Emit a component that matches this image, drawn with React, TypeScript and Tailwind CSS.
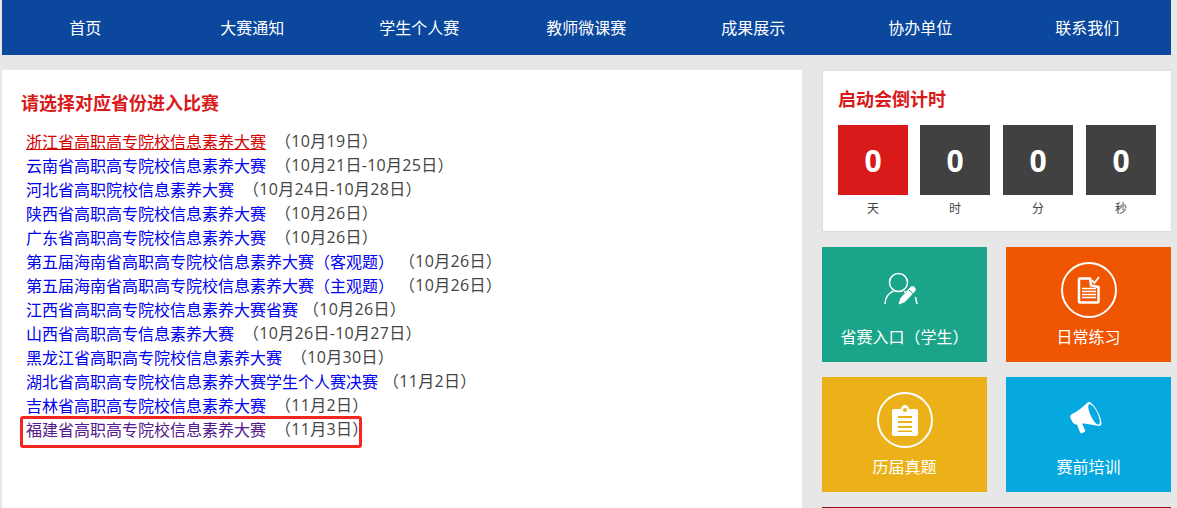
const nav = ["首页", "大赛通知", "学生个人赛", "教师微课赛", "成果展示", "协办单位", "联系我们"];

const rows: [string, string, string, boolean][] = [
  ["浙江省高职高专院校信息素养大赛", "（10月19日）", "hover", true],
  ["云南省高职高专院校信息素养大赛", "（10月21日-10月25日）", "", true],
  ["河北省高职院校信息素养大赛", "（10月24日-10月28日）", "", true],
  ["陕西省高职高专院校信息素养大赛", "（10月26日）", "", true],
  ["广东省高职高专院校信息素养大赛", "（10月26日）", "", true],
  ["第五届海南省高职高专院校信息素养大赛（客观题）", "（10月26日）", "", false],
  ["第五届海南省高职高专院校信息素养大赛（主观题）", "（10月26日）", "", false],
  ["江西省高职高专院校信息素养大赛省赛", "（10月26日）", "", false],
  ["山西省高职高专信息素养大赛", "（10月26日-10月27日）", "", true],
  ["黑龙江省高职高专院校信息素养大赛", "（10月30日）", "", true],
  ["湖北省高职高专院校信息素养大赛学生个人赛决赛", "（11月2日）", "", false],
  ["吉林省高职高专院校信息素养大赛", "（11月2日）", "", true],
  ["福建省高职高专院校信息素养大赛", "（11月3日）", "visited", true],
];

const UserPen = () => (
  <svg className="mb-[3px] mr-[7px]" width="34" height="34" viewBox="0 0 34 34" fill="none" stroke="white" strokeWidth="1.5">
    <circle cx="14.500" cy="10.500" r="9" />
    <path d="M1 32c0-6 3.500-11 8.500-13" />
    <path d="M20 19.500c1 .3 1.800.7 2.500 1.200" />
    <path d="M15 32l2-6 9.500-10.500c1.200-1.200 3-1.200 4 0s1 2.800 0 4l-9.500 10z" fill="white" stroke="white" strokeWidth="1" />
    <path d="M25 18l4 3.500" stroke="#1aa58a" strokeWidth="1" />
    <path d="M31.500 25l1.500 7" />
  </svg>
);

const Circle = ({ children }: { children: React.ReactNode }) => (
  <div className="flex h-[56px] w-[56px] items-center justify-center rounded-full border-2 border-white">{children}</div>
);

const DocIcon = () => (
  <svg width="24" height="28" viewBox="0 0 24 28" fill="none">
    <path d="M2 2.500h11l1 7 7.500 1.500v14.500a1 1 0 0 1-1 1H3a1 1 0 0 1-1-1V3.500a1 1 0 0 1 1-1z" stroke="white" strokeWidth="2.500" />
    <path d="M5 12.500h14M5 15.500h14M5 18.500h14M5 21.500h14" stroke="white" strokeWidth="1.500" />
    <path d="M14.500 4l3 3 4.500-6" stroke="white" strokeWidth="1.800" />
  </svg>
);

const ClipIcon = () => (
  <svg width="26" height="31" viewBox="0 0 26 31">
    <path
      fillRule="evenodd"
      fill="white"
      d="M9 4c.5-2.500 2-4 4-4s3.500 1.500 4 4h7a2 2 0 0 1 2 2v23a2 2 0 0 1-2 2H2a2 2 0 0 1-2-2V6a2 2 0 0 1 2-2zM13 3a2 2 0 1 0 0 4 2 2 0 0 0 0-4zM6 11v2h14v-2zM6 16v2h14v-2zM6 21v2h14v-2zM6 25.500v1.500h14v-1.500z"
    />
  </svg>
);

const Horn = () => (
  <svg className="mb-[3px] mr-[6px]" width="32" height="33" viewBox="0 0 32 33">
    <path
      fill="white"
      d="M1 17c-1.300-1.500-.8-4 1-5 5-2.500 10-6 15-11 1-1 2.500-1.300 3.500-.5 5 3.500 11 14.500 11 21 0 1.500-1 2.500-2.500 2.500-6-1-11.500-2.500-17-2.500l3 6.500c.4 1-.1 1.800-1 2.300l-1.500.8c-1 .5-2 .2-2.500-.8L7 22.500c-2.500.5-5-2.500-6-5.500z"
    />
    <path
      fill="#05a9e0"
      d="M19 2.500c-1.600.8-.5 6 2 11.500s5.800 9 7.800 8.500c2-.5 1-6-1.500-11.500S21 1.500 19 2.500z"
    />
  </svg>
);

const tiles = [
  { label: "省赛入口（学生）", bg: "bg-[#1aa58a]", icon: <UserPen /> },
  { label: "日常练习", bg: "bg-[#f05602]", icon: <Circle><DocIcon /></Circle> },
  { label: "历届真题", bg: "bg-[#ecb018]", icon: <Circle><ClipIcon /></Circle> },
  { label: "赛前培训", bg: "bg-[#05a9e0]", icon: <Horn /> },
];

const units = ["天", "时", "分", "秒"];

export default function App() {
  return (
    <div className="h-[508px] w-[1177px] overflow-hidden bg-[#e7e7e7] pl-[2px] font-['Noto_Sans_CJK_SC','Liberation_Sans',sans-serif] text-[16px]">
      <nav className="flex h-[55px] w-[1169px] bg-[#0a479d] text-white">
        {nav.map((n) => (
          <a key={n} className="flex flex-1 items-center justify-center pb-[2px] pr-[0.5px] leading-none">{n}</a>
        ))}
      </nav>
      <div className="mt-[15px] flex gap-[20px]">
        <main className="relative h-[438px] w-[800px] bg-white pl-[19px] pt-[20px]">
          <h2 className="text-[18px] font-bold leading-[24px] text-[#d91a1a]">请选择对应省份进入比赛</h2>
          <ul className="mt-[15px] pl-[5px]">
            {rows.map(([name, date, state, wide]) => (
              <li key={name} className="flex h-[24px] items-center leading-[24px] text-[#444]">
                <a className={state === "hover" ? "text-[#d40000] underline" : state === "visited" ? "text-[#551a8b]" : "text-[#0000ee]"}>{name}</a>
                <span className={`font-['Open_Sans','Noto_Sans_CJK_SC',sans-serif] tracking-[0.3px] ${wide ? "ml-[9px]" : "ml-[5px]"}`}>{date}</span>
              </li>
            ))}
          </ul>
          <div className="absolute left-[18px] top-[346px] h-[32px] w-[342px] rounded-[3px] border-[3px] border-[#f5251f]" />
        </main>
        <aside className="w-[350px]">
          <section className="h-[162px] border border-[#dedede] bg-white px-[15px] pt-[15px]">
            <h3 className="text-[18px] font-bold leading-[24px] text-[#d91a1a]">启动会倒计时</h3>
            <div className="mt-[15px] flex gap-[13px]">
              {units.map((u, i) => (
                <div key={u} className={`w-[70px] text-center ${i === 0 ? "mr-[-1px]" : ""}`}>
                  <div className={`flex h-[70px] items-center justify-center font-['Open_Sans','Liberation_Sans',sans-serif] text-[30px] font-bold text-white ${i === 0 ? "bg-[#d91a1a]" : "bg-[#414141]"}`}>0</div>
                  <div className="mt-[5px] text-[12px] leading-[16px] text-[#444]">{u}</div>
                </div>
              ))}
            </div>
          </section>
          <div className="mt-[15px] grid w-[349px] grid-cols-[165px_165px] justify-between gap-y-[15px]">
            {tiles.map((t) => (
              <div key={t.label} className={`flex h-[115px] flex-col items-center text-white ${t.bg}`}>
                <div className="mt-[15px] flex h-[56px] items-center justify-center">{t.icon}</div>
                <div className="mt-[6px] leading-[24px]">{t.label}</div>
              </div>
            ))}
          </div>
          <div className="mt-[15px] h-[1px] w-[349px] bg-[#9c0a1c]" />
        </aside>
      </div>
    </div>
  );
}
